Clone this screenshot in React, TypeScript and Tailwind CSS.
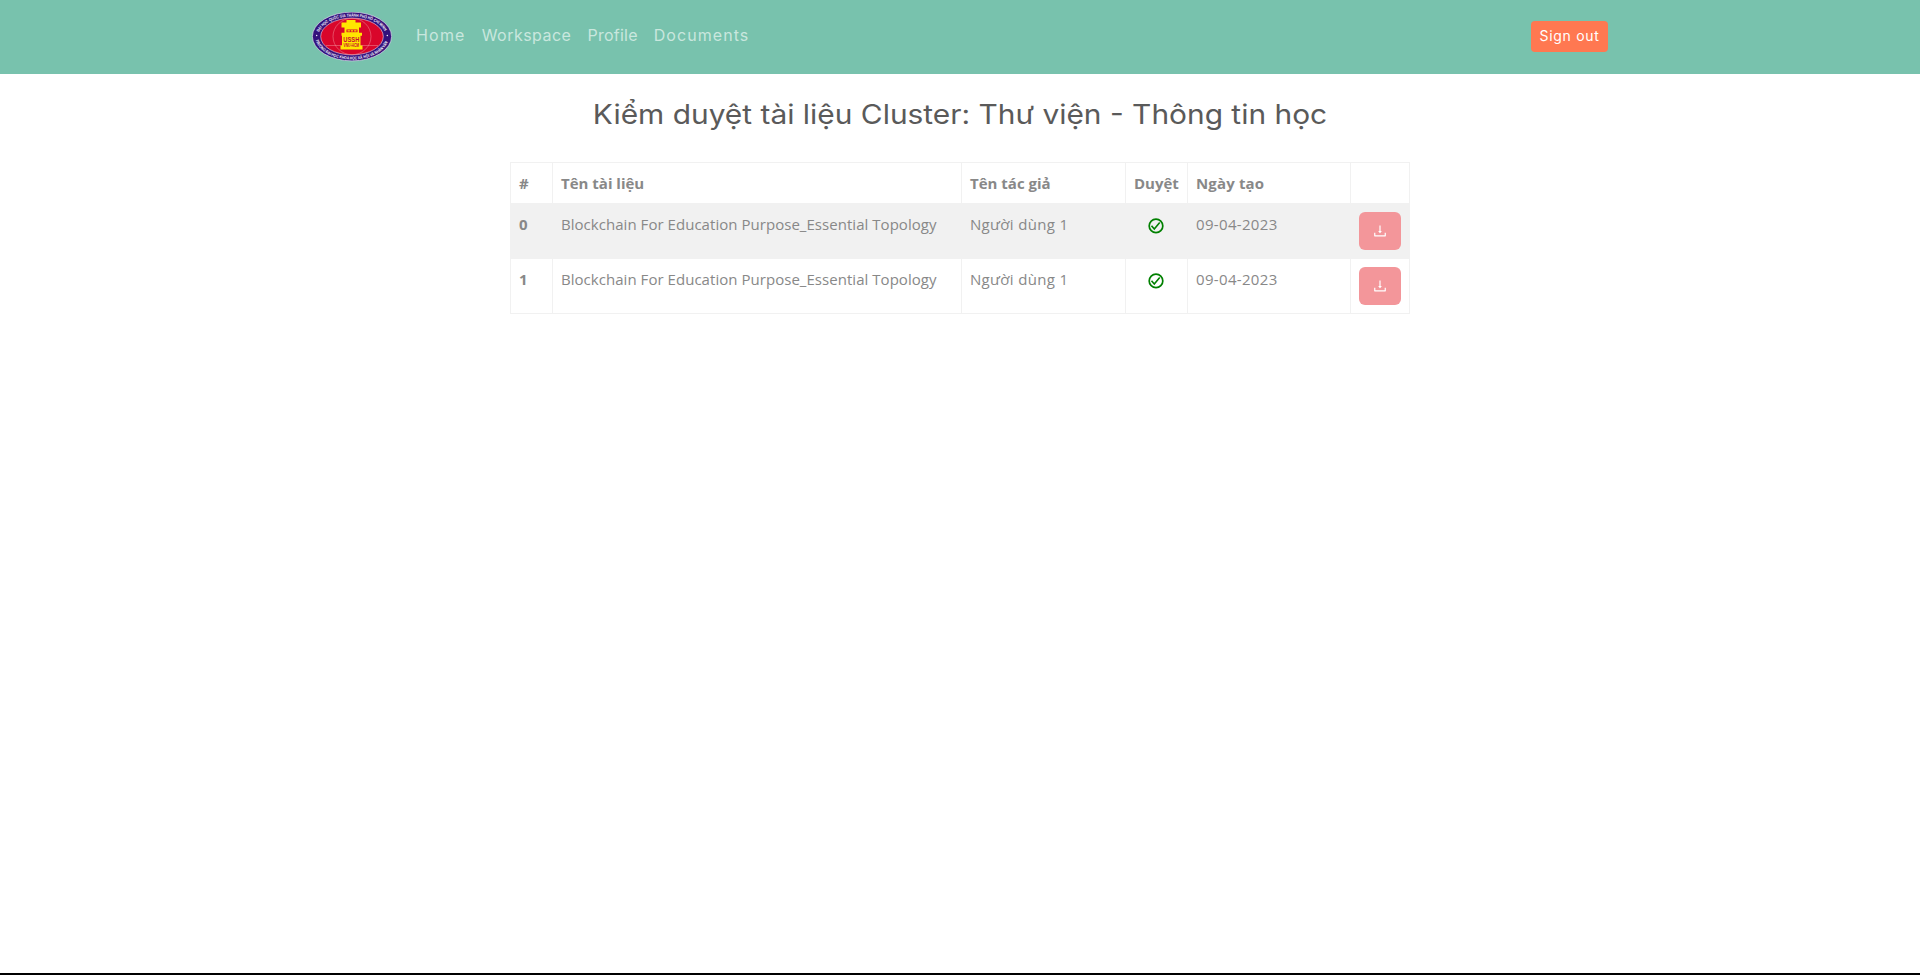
import { AiOutlineDownload } from "react-icons/ai";

const links = [
  { label: "Home", spacing: "tracking-[1.2px]" },
  { label: "Workspace", spacing: "tracking-[0.48px]" },
  { label: "Profile", spacing: "tracking-[0.25px]" },
  { label: "Documents", spacing: "tracking-[1.05px]" },
];

const documents = [
  { id: 0, name: "Blockchain For Education Purpose_Essential Topology", author: "Người dùng 1", date: "09-04-2023" },
  { id: 1, name: "Blockchain For Education Purpose_Essential Topology", author: "Người dùng 1", date: "09-04-2023" },
];

function Logo() {
  return (
    <svg width="80" height="50" viewBox="0 0 80 50" className="block shrink-0">
      <defs>
        <path id="arcTop" d="M7.1 20 A33.8 20 0 0 1 72.9 20" />
        <path id="arcBottom" d="M3.6 28 A36.8 22.9 0 0 0 76.4 28" />
      </defs>
      <ellipse cx="40" cy="24.5" rx="39.6" ry="24.4" fill="#33117c" stroke="#d8d5e8" strokeWidth="0.7" />
      <ellipse cx="40" cy="24.5" rx="31.3" ry="18.4" fill="#d9062b" stroke="#e9d9e6" strokeWidth="0.6" />
      <g fill="none" stroke="#f0909a" strokeWidth="0.5">
        <ellipse cx="40" cy="24.5" rx="19" ry="18.2" />
        <path d="M14 33.5H66" />
      </g>
      <g fill="#ffe600">
        <path d="M34.500 8h9v2.500h5.500v5h-19.500v-5h5z" />
        <path d="M32.500 15h14.500v6h-14.500z" />
        <path d="M29.500 20.800h20.500v3h-1.500v9.700h2v4h-22v-4h1.500v-9.700h-.5z" />
      </g>
      <path d="M34.500 17.500h11v2.700h-11z" fill="#d9062b" />
      <path d="M35.500 18.900h2.400M38.800 18.900h2.400M42.100 18.900h2.400" stroke="#ffe600" strokeWidth="1.1" />
      <text x="39.300" y="29.900" textAnchor="middle" textLength="16" lengthAdjust="spacingAndGlyphs" className="font-['Liberation_Sans',sans-serif] text-[8px] font-bold" fill="#c8102e">USSH</text>
      <text x="39.300" y="35" textAnchor="middle" textLength="15.500" lengthAdjust="spacingAndGlyphs" className="font-['Liberation_Sans',sans-serif] text-[4.5px] font-bold" fill="#c8102e">VNU-HCM</text>
      <g fill="#f4f2fb" className="font-['Liberation_Sans',sans-serif] text-[4.2px] font-bold">
        <text textLength="75" lengthAdjust="spacingAndGlyphs"><textPath href="#arcTop">ĐẠI HỌC QUỐC GIA THÀNH PHỐ HỒ CHÍ MINH</textPath></text>
        <text textLength="86" lengthAdjust="spacingAndGlyphs"><textPath href="#arcBottom">TRƯỜNG ĐẠI HỌC KHOA HỌC XÃ HỘI VÀ NHÂN VĂN</textPath></text>
      </g>
      <circle cx="4.700" cy="23.500" r="0.7" fill="#fff" />
      <circle cx="75.300" cy="23.500" r="0.7" fill="#fff" />
    </svg>
  );
}

function ApprovedIcon() {
  return (
    <svg width="16" height="16" viewBox="0 0 16 16" fill="none" stroke="#008000" className="block">
      <circle cx="8" cy="7.900" r="6.800" strokeWidth="1.700" />
      <path d="M3.500 7.700 L6.300 11 L11.700 4.500" strokeWidth="1.600" />
    </svg>
  );
}

function Navbar() {
  return (
    <nav className="h-[74px] bg-[#78c2ad] font-[Inter,'Noto_Sans',sans-serif]">
      <div className="mx-auto flex h-full w-[1296px] items-center pb-px">
        <Logo />
        <ul className="ml-4 flex text-base leading-6 text-[#c9e7de]">
          {links.map((link) => (
            <li key={link.label} className={"px-2 pb-[3px] " + link.spacing}>
              <a href="#">{link.label}</a>
            </li>
          ))}
        </ul>
        <button className="ml-auto flex h-[31px] w-[77px] justify-center rounded bg-[#ff7851] pt-1 text-sm leading-[21px] tracking-[0.7px] text-white">
          Sign out
        </button>
      </div>
    </nav>
  );
}

export default function App() {
  return (
    <div className="flex h-[975px] flex-col border-b-2 border-black bg-white">
      <Navbar />
      <main className="mx-auto w-[900px]">
        <h3 className="mt-6 scale-x-[1.107] text-center font-[Inter,'Noto_Sans',sans-serif] text-[27px] leading-[34px] whitespace-nowrap text-[#5a5a5a]">
          Kiểm duyệt tài liệu Cluster: Thư viện - Thông tin học
        </h3>
        <table className="mt-[30px] w-[900px] table-fixed border-separate border-spacing-0 border-t border-l border-[#f1f1f1] text-left align-top font-['Open_Sans','Noto_Sans',sans-serif] text-[15px] leading-6 text-[#888]">
          <colgroup>
            <col className="w-[42px]" />
            <col className="w-[409px]" />
            <col className="w-[164px]" />
            <col className="w-[62px]" />
            <col className="w-[163px]" />
            <col className="w-[59px]" />
          </colgroup>
          <thead>
            <tr className="h-[41px] *:border-r *:border-b *:border-[#f1f1f1] *:px-2 *:align-middle *:font-bold *:whitespace-nowrap">
              <th>#</th>
              <th>Tên tài liệu</th>
              <th>Tên tác giả</th>
              <th>Duyệt</th>
              <th className="tracking-[0.15px]">Ngày tạo</th>
              <th></th>
            </tr>
          </thead>
          <tbody>
            {documents.map((doc) => (
              <tr key={doc.id} className="h-[55px] *:border-r *:border-b *:border-[#f1f1f1] *:px-2 *:pt-2 *:align-top *:whitespace-nowrap odd:bg-[#f1f1f1]">
                <th className="font-bold">{doc.id}</th>
                <td className="tracking-[0.04px]">{doc.name}</td>
                <td className="tracking-[0.33px]">{doc.author}</td>
                <td>
                  <div className="flex h-7 items-center justify-center pr-px">
                    <ApprovedIcon />
                  </div>
                </td>
                <td className="tracking-[0.33px]">{doc.date}</td>
                <td>
                  <button className="flex h-[38px] w-[42px] items-center justify-center rounded-md bg-[#f3969a] text-white">
                    <AiOutlineDownload size={16} />
                  </button>
                </td>
              </tr>
            ))}
          </tbody>
        </table>
      </main>
    </div>
  );
}
